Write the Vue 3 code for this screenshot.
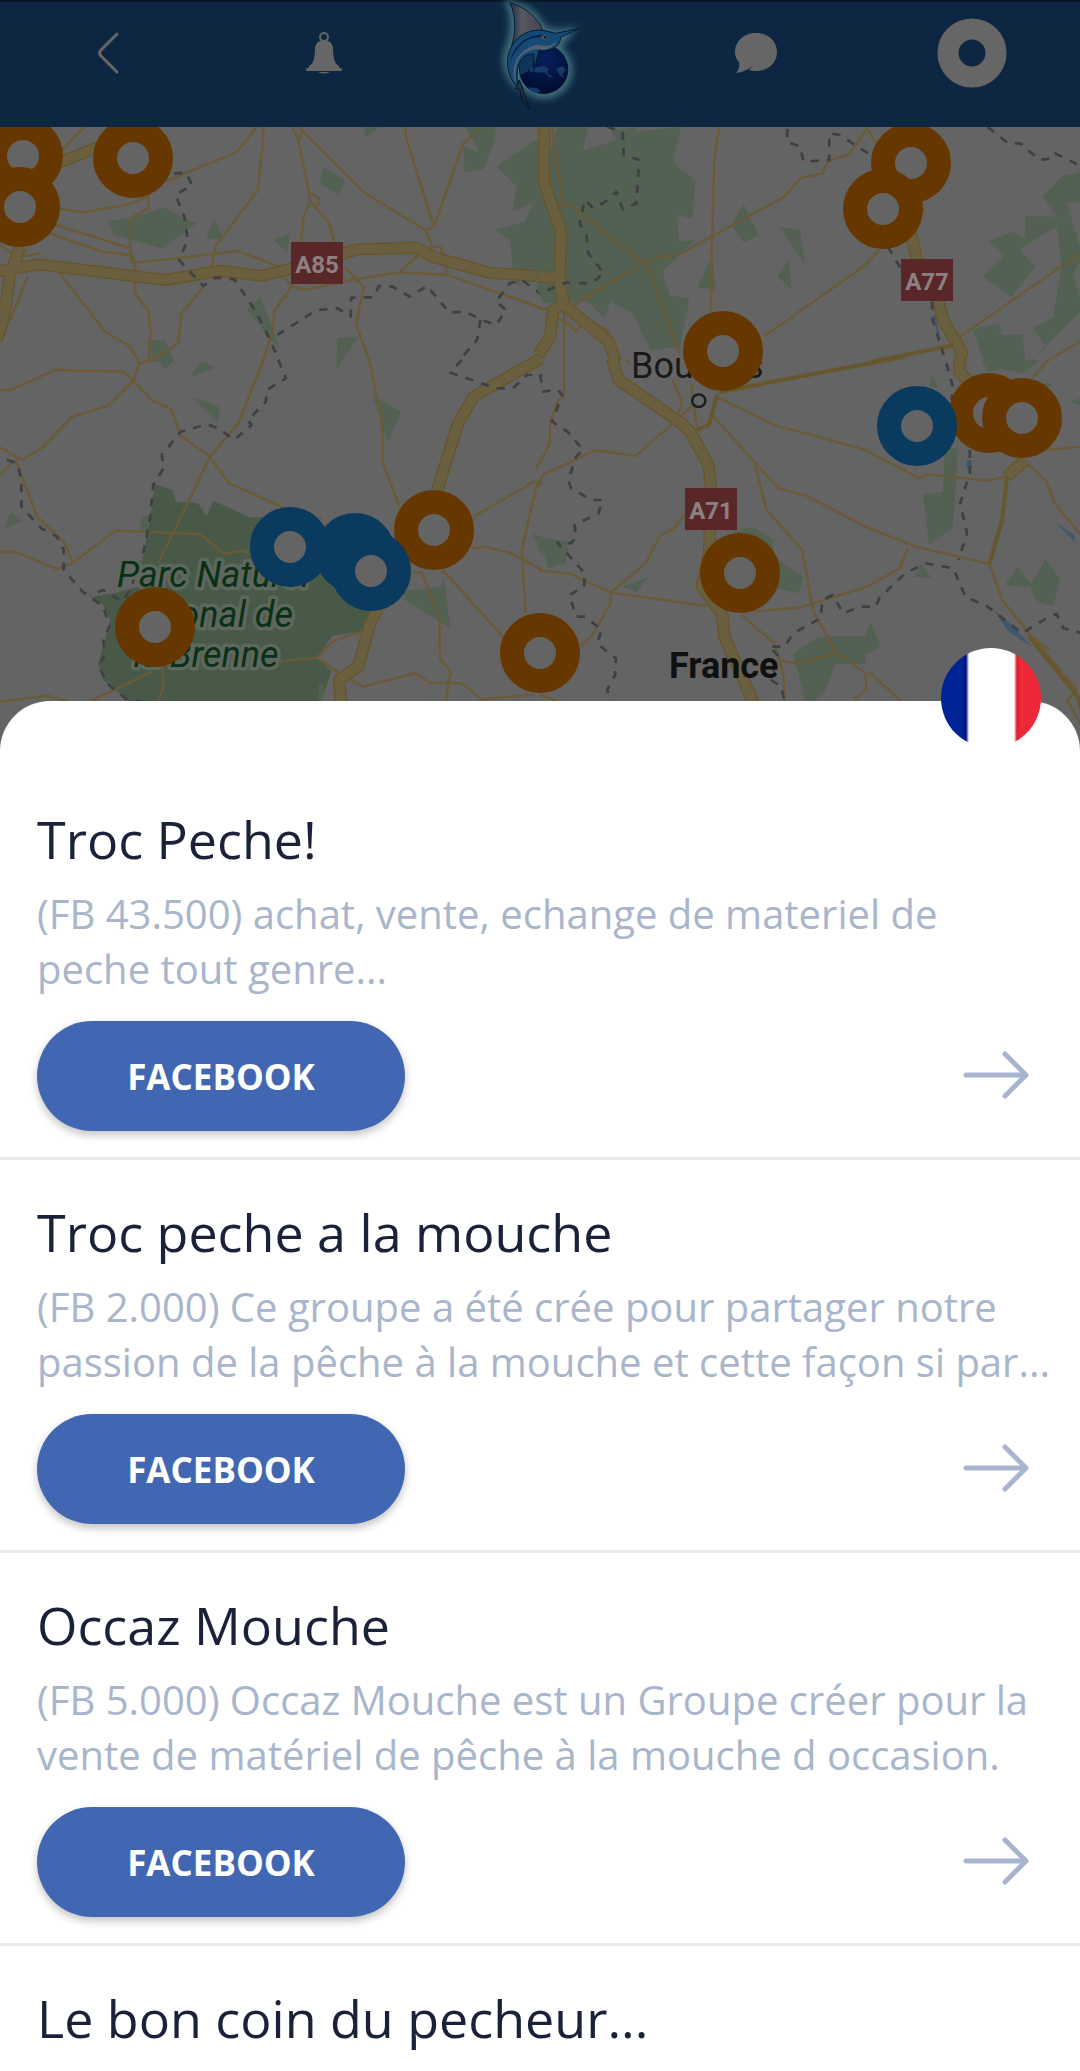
<script setup>
const pins = [
  { x: 23, y: 156, kind: 'orange' },
  { x: 20, y: 207, kind: 'orange' },
  { x: 133, y: 158, kind: 'orange' },
  { x: 911, y: 163, kind: 'orange' },
  { x: 883, y: 209, kind: 'orange' },
  { x: 723, y: 351, kind: 'orange' },
  { x: 434, y: 530, kind: 'orange' },
  { x: 355, y: 553, kind: 'blue' },
  { x: 290, y: 547, kind: 'blue' },
  { x: 371, y: 571, kind: 'blue' },
  { x: 155, y: 627, kind: 'orange' },
  { x: 540, y: 653, kind: 'orange' },
  { x: 989, y: 413, kind: 'orange' },
  { x: 1022, y: 418, kind: 'orange' },
  { x: 917, y: 426, kind: 'blue' },
  { x: 740, y: 573, kind: 'orange' },
]

const shields = [
  { x: 291, y: 242, name: 'A85' },
  { x: 901, y: 259, name: 'A77' },
  { x: 685, y: 488, name: 'A71' },
]

const groups = [
  {
    title: 'Troc Peche!',
    text: '(FB 43.500) achat, vente, echange de materiel de\npeche tout genre...',
  },
  {
    title: 'Troc peche a la mouche',
    text: '(FB 2.000) Ce groupe a été crée pour partager notre\npassion de la pêche à la mouche et cette façon si par...',
  },
  {
    title: 'Occaz Mouche',
    text: '(FB 5.000) Occaz Mouche est un Groupe créer pour la\nvente de matériel de pêche à la mouche d occasion.',
  },
  { title: 'Le bon coin du pecheur...' },
]
</script>

<template>
  <div class="page">
    <header class="topbar">
      <button class="nav" aria-label="Retour">
        <svg width="24" height="44" viewBox="0 0 24 44" fill="none" stroke="#666" stroke-width="3" stroke-linecap="round" stroke-linejoin="round">
          <path d="M21 3 L5 19 Q2 22 5 25 L21 41" />
        </svg>
      </button>
      <button class="nav" aria-label="Notifications">
        <svg width="36" height="42" viewBox="0 0 36 42" fill="#666">
          <circle cx="18" cy="5" r="4" fill="none" stroke="#666" stroke-width="2" />
          <path d="M18 8 C24 8 27 12 27 17 C27 27 29 32 33 34 V36 H35 Q36 36 36 37 V38 Q36 39 35 39 H1 Q0 39 0 38 V37 Q0 36 1 36 H3 V34 C7 32 9 27 9 17 C9 12 12 8 18 8Z" />
          <path d="M12 40 H24 Q18 43 12 40Z" />
        </svg>
      </button>
      <a class="nav" href="#" aria-label="Accueil">
        <svg class="logo" width="100" height="102" viewBox="60 6 300 306">
          <defs>
            <filter id="halo" x="-50%" y="-50%" width="200%" height="200%"><feGaussianBlur stdDeviation="11" /></filter>
            <radialGradient id="globe" cx=".55" cy=".3" r=".75">
              <stop offset="0" stop-color="#071f5a" />
              <stop offset="1" stop-color="#010a2c" />
            </radialGradient>
            <linearGradient id="fin" x1="0" y1="0" x2="1" y2="0">
              <stop offset="0" stop-color="#17304a" />
              <stop offset=".35" stop-color="#585660" />
              <stop offset="1" stop-color="#46454f" />
            </linearGradient>
          </defs>
          <g filter="url(#halo)" fill="#40707c" stroke="#40707c" stroke-width="20">
            <circle cx="222" cy="210" r="76" />
            <path d="M118 12 C165 20 205 50 218 88 L265 100 L300 94 L262 140 L150 260 C105 230 100 170 118 140 C132 100 134 50 118 12Z" />
          </g>
          <circle cx="221" cy="208" r="74" fill="url(#globe)" />
          <path d="M150 185 Q172 158 194 158 L188 195 L172 215 L150 226Z" fill="#103558" />
          <path d="M178 205 l14 -8 12 5 18 -4 14 8 -4 12 20 16 -14 -4 -16 -14 -18 2 -14 -4 -8 6Z M258 205 l22 -6 8 12 -12 12 8 12 -16 -10Z M174 262 l28 2 10 12 -22 2Z" fill="#163968" />
          <path d="M120 8 C165 20 206 55 218 92 C185 92 145 110 124 140 C138 100 138 50 120 8Z" fill="url(#fin)" stroke="#0a1c30" stroke-width="3" />
          <path d="M122 145 C140 106 180 86 220 91 L256 100 L328 86 L270 112 L272 118 L264 134 C245 152 214 156 207 150 L192 210 L192 162 C156 160 130 196 146 264 C112 236 104 180 122 145Z" fill="#164a76" stroke="#06182b" stroke-width="3" />
          <path d="M119 190 C130 132 175 102 222 104 L208 112 C165 112 136 145 119 190Z" fill="#08204a" />
          <path d="M132 236 C124 178 160 140 204 134 Q224 140 244 134 L262 126 C246 148 216 152 204 147 C154 150 126 188 140 252Z" fill="#526072" />
          <circle cx="223" cy="112" r="8" fill="#707070" stroke="#102a40" stroke-width="2" />
          <circle cx="224" cy="112" r="4" fill="#05101c" />
          <path d="M136 266 L148 240 L158 264 Q164 300 178 325 Q154 304 149 268Z" fill="#1c3347" stroke="#07111d" stroke-width="3" />
        </svg>
      </a>
      <button class="nav" aria-label="Messages">
        <svg width="42" height="40" viewBox="0 0 42 40" fill="#666">
          <path d="M21 0 C33 0 42 8 42 19 C42 30 33 38 21 38 Q17 38 14 37 L18 33 Q10 39 1 40 Q5 36 4 29 Q0 25 0 19 C0 8 9 0 21 0Z" />
        </svg>
      </button>
      <button class="nav" aria-label="Profil">
        <svg width="70" height="70" viewBox="0 0 70 70">
          <circle cx="35" cy="35" r="24" fill="none" stroke="#666" stroke-width="21" />
        </svg>
      </button>
    </header>

    <svg class="map" viewBox="0 127 1080 633" preserveAspectRatio="xMidYMin slice" role="img" aria-label="Carte">
      <!-- north-west tile -->
      <g transform="scale(.3444 .3333)">
        <path class="wood" d="M312 662 L380 655 L475 622 L570 670 L472 746 L330 704Z M622 655 L650 716 L598 716Z M795 720 L841 702 L836 760Z M938 502 L1000 540 L986 588 L930 552Z M1058 381 H1104 L1060 414Z M1350 381 H1440 L1436 420 L1404 508 L1350 516 L1345 438 L1392 456Z M1575 405 L1442 500 L1500 560 L1488 634 L1550 610 L1524 664 L1436 690 L1482 720 L1488 810 H1575Z M756 892 L812 1045 L780 1010 L716 928Z M425 1020 L480 1022 L505 1085 H450Z M978 1014 L1042 1010 L990 1085 H978Z M1475 850 l30 -10 15 15Z" />
        <g class="road">
          <path d="M245 381 L180 450 M745 381 L688 456 L480 545 M765 381 L762 440 L748 572 L625 740 L614 800 M848 381 L868 425 L902 605 L882 650 L874 726 M868 381 L1060 580 L1235 690 L1255 735 M878 395 L866 425 M902 605 L955 668 L970 726 M905 580 L930 600 L918 622 M1178 381 V410 L1260 680 L1235 690 M1400 381 L1345 430 L1260 680" />
          <path d="M170 625 L240 637 L365 615 L432 590 L430 625 L380 655 L378 755 L392 788 V880 L432 935 L437 1000 L432 1080 M160 675 L380 745 M145 700 L295 755 L375 765 M392 788 L560 770 L688 753 L820 803 M395 800 L375 765 M0 735 L60 780 M170 815 L305 995 L375 1038 L400 1080 M590 862 L527 940 L518 1030 L440 1080 M850 855 L798 930 L790 1000 L765 1080 M825 833 L850 860 L885 870 L1045 835 L1165 817 L1300 825 L1575 925 M1160 817 L1215 765 M1000 800 L1056 860 L1034 975 L1072 1080 M1250 740 L1280 740 L1300 825 M60 770 L120 760 M80 830 L30 960" />
        </g>
        <path class="casing" d="M155 495 L300 435 M-10 815 L110 793 L480 840 L640 812 L760 828 L850 805 L1000 760 L1040 748 L1210 743 L1260 772 L1420 818 L1580 830 M60 740 L30 820 L10 960 L-10 1020" />
        <path class="motorway" d="M155 495 L300 435 M-10 815 L110 793 L480 840 L640 812 L760 828 L850 805 L1000 760 L1040 748 L1210 743 L1260 772 L1420 818 L1580 830 M60 740 L30 820 L10 960 L-10 1020" />
        <path class="border" d="M505 520 L540 518 L558 555 L510 585 L535 650 L545 720 L520 780 L590 858 L625 833 L680 838 L740 930 L775 1000 L810 1080 M805 1005 L920 930 L980 925 L1018 950 L1020 893 L1085 892 L1100 858 L1140 860 L1190 890 L1240 858 L1305 938 L1350 935 L1405 962 L1440 975 L1470 930 L1440 905 L1480 850 L1515 840 L1575 885 M1395 960 L1385 1020 L1335 1080" />
      </g>

      <!-- north-east tile -->
      <g transform="translate(540 0) scale(.3444 .3333)">
        <path class="wood" d="M50 381 H140 L124 452 L222 420 L205 395 L275 381 L280 395 L410 381 L386 488 L452 542 L442 656 L398 645 L404 725 L450 720 L356 815 L376 886 L434 896 L406 1040 L320 1050 L268 940 L205 905 L186 955 L140 905 L10 910 L-10 860 V610 L25 470Z M592 612 L634 705 L592 728 L554 675Z M695 680 L756 690 L770 795Z M724 778 L730 866 L690 830Z M500 765 L510 870 L458 862Z M1408 648 L1500 650 L1460 590 L1520 525 L1575 520 V605 L1530 610 L1575 770 L1550 820 L1575 930 L1420 1085 L1470 1040 L1430 985 L1490 950 L1515 790 L1500 680 L1392 748 L1438 800 L1370 890 L1284 830 L1350 765 L1300 725 L1370 695 L1410 715Z M1255 988 L1332 972 L1340 1005 L1402 1004 L1410 1085 H1290Z" />
        <g class="road">
          <path d="M35 381 L66 610 M45 605 L95 620 L300 790 L320 820 L405 1060 M520 381 L506 480 L500 710 L496 935 M100 915 L300 785 L410 760 L710 590 L755 535 L820 520 L836 485 L900 460 L950 385 L975 430 M985 750 L945 795 L650 1010 M1105 600 L1115 640 M1575 755 L1220 1010 M1575 1020 L1470 1085 M-5 925 L40 930 M70 960 L105 995 L130 960 L195 990 L220 1085 M70 930 V1080 M20 940 L70 965" />
        </g>
        <path class="casing" d="M12 381 V550 L60 690 L58 860 L70 915 L200 1025 L220 1085 M-5 830 L58 833 M65 915 L38 930 L30 1010 L-5 1065 M1075 690 L1095 780 M1155 900 L1170 960 L1225 1055 L1220 1085" />
        <path class="motorway" d="M12 381 V550 L60 690 L58 860 L70 915 L200 1025 L220 1085 M-5 830 L58 833 M65 915 L38 930 L30 1010 L-5 1065 M1075 690 L1095 780 M1155 900 L1170 960 L1225 1055 L1220 1085" />
        <path class="trunk" d="M960 1085 L1200 1036" />
        <path class="river" d="M1145 945 L1160 1020" />
        <path class="border" d="M195 381 L240 395 L243 465 L288 480 L280 610 L240 628 L222 575 L190 605 L155 625 L130 600 L115 670 L135 705 L140 760 L185 820 L150 850 L75 848 L0 880 M718 387 V425 L755 440 L765 485 L840 480 V400 L870 405 L960 465 M1300 381 L1360 430 L1395 430 L1450 480 L1485 475 L1495 460 L1555 490 L1560 520 M1010 740 L1050 810 M1138 905 L1140 960 L1172 1065" />
      </g>

      <!-- south-west tile -->
      <g transform="translate(0 360) scale(.3444 .3333)">
        <path class="park" d="M450 372 L500 390 L512 425 L575 430 L600 468 L620 422 L725 472 H800 L1100 760 L1060 812 L965 828 L920 890 L962 935 L930 1030 H380 L300 960 L285 910 L305 840 L320 780 L300 735 L262 712 L330 700 L400 680 L435 480Z" />
        <path class="wood" d="M460 0 H505 L480 30Z M585 5 L628 22 L548 52Z M552 108 L637 140 L634 188Z M978 -10 H1000 L978 34Z M1080 105 L1164 155 L1128 246 L1110 190Z M30 455 L65 482 L12 506Z M412 465 L432 470 L428 515 L406 510Z M1175 692 L1280 680 L1288 645 L1308 805 L1175 720Z M1545 520 l30 10 v60Z M925 975 L942 970 L935 1025 H925Z" />
        <g class="road">
          <path d="M0 92 L35 88 L160 30 L358 35 L388 62 L440 120 L498 148 L525 228 L610 290 L662 368 L820 442 M388 62 L405 10 L445 0 M388 62 L312 138 L210 170 L120 265 L65 300 L0 262 M40 300 L0 345 M45 300 L108 470 L185 545 L212 608 L335 512 L580 522 L650 580 L710 572 L740 590 M212 608 L168 628 L45 576 H0 M400 0 L405 20 M765 0 L692 190 L610 290 L460 610 M1072 0 L1110 190 L1112 310 L1160 440 M820 442 L935 475 M1375 470 L1550 365 L1575 370 M1560 370 L1515 570 L1526 760 M1370 565 L1405 560 L1480 578 L1575 630 M1555 330 L1575 290 M1285 630 L1460 830 M1190 635 L1225 637 L1275 770 L1278 895 L1308 935 L1295 1025 M810 905 L920 893 L965 845 L1060 810 M920 893 L985 940 L1055 980 L1205 940 L1250 968 L1340 970 L1400 1018 L1555 1003 M0 1025 L140 1008 L200 1025 M260 1025 L440 935 M470 920 L475 980 L460 1025" />
        </g>
        <path class="casing" d="M1570 -5 L1375 110 L1330 190 L1270 390 M1100 740 L1075 790 L1040 920 L985 960 L992 1060" />
        <path class="motorway" d="M1570 -5 L1375 110 L1330 190 L1270 390 M1100 740 L1075 790 L1040 920 L985 960 L992 1060" />
        <path class="border" d="M808 0 L830 55 L775 90 L772 125 L720 180 L730 195 L680 240 L635 205 L600 193 L525 215 L470 285 L475 325 L445 375 L435 480 L418 570 L378 690 L355 725 L300 690 L260 705 M20 300 L50 310 L62 360 V440 L120 505 L165 530 L185 570 V630 L240 695 L300 740 L318 800 L300 840 L305 880 L288 920 L310 970 L370 1020 L430 1025 M1340 0 L1308 38 L1440 85 L1490 85 L1530 45 L1575 45" />
      </g>

      <!-- south-east tile -->
      <g transform="translate(540 360) scale(.3444 .3333)">
        <path class="wood" d="M-5 532 L85 545 L75 610 L25 625Z M240 680 L315 652 L280 695Z M560 515 L620 500 L678 540 V590 L765 652 L752 700 L690 685Z M735 880 L810 830 L944 828 L960 786 L990 860 L945 885 V912 L856 912 L830 990 L790 1030 L768 1020Z M1175 265 L1213 265 L1200 500 L1130 555 L1112 405 L1170 395Z M1105 610 L1138 655 L1086 650Z M1350 675 L1386 620 L1424 670 L1468 598 L1510 660 L1490 738 L1445 725 L1422 678 L1410 680Z M1284 0 H1450 L1405 40 L1340 28 L1300 35Z M1138 42 L1155 85 L1130 80Z M1455 70 H1490 L1470 85Z M1540 125 L1575 112 V140Z" />
        <path class="water" d="M1495 485 L1552 525 V546Z M1318 750 L1365 790 L1430 862 L1360 815Z M1240 300 L1254 300 V325 L1238 325Z" />
        <g class="road">
          <path d="M70 0 V110 L50 125 L30 190 L28 250 L0 310 M-5 380 L8 345 L162 270 L278 288 L380 195 L450 130 M250 0 L262 15 M385 60 L412 125 L400 165 M440 70 L455 200 M500 165 L692 385 L775 408 L945 500 L1090 560 L1305 612 M625 318 L658 450 L762 570 L792 750 L862 880 L945 940 L960 940 L1050 1025 M520 115 L680 195 L945 270 L1100 355 L1125 343 L1300 362 L1350 350 M1068 565 L1045 625 L950 680 L755 742 L620 755 M430 455 L385 508 L350 525 L308 608 L205 698 L85 640 L0 632 M205 698 L485 738 M205 698 L203 735 L152 825 L118 860 M585 765 L680 850 L708 950 L710 1025 M690 900 L745 910 L862 880 M945 940 L948 990 L912 1015 M1305 612 L1342 720 L1420 820 L1560 990 M1410 305 L1468 360 L1495 430 L1575 530 M1470 270 L1575 260 M1430 55 L1475 0 M1415 820 L1480 870 M0 1005 L55 1025 M1560 990 L1530 1020 L1575 1100" />
        </g>
        <path class="casing" d="M210 -5 L228 60 L405 185 L440 220 L490 320 L498 400 L490 590 L470 680 L530 765 L535 830 L625 1040 M1220 -5 L1218 35 L1250 70 M1410 300 L1355 350" />
        <path class="motorway" d="M210 -5 L228 60 L405 185 L440 220 L490 320 L498 400 L490 590 L470 680 L530 765 L535 830 L625 1040 M1220 -5 L1218 35 L1250 70 M1410 300 L1355 350" />
        <path class="trunk" d="M520 98 L700 60 L1060 -10 M515 105 L490 195 L450 212 M1356 350 L1342 480 L1305 612 M1420 830 L1565 1015 L1580 1090" />
        <path class="border" d="M0 45 L10 95 L50 88 L65 105 L35 185 L80 215 L125 270 L105 290 L82 360 L90 385 L150 420 L182 420 L170 460 L100 495 L105 530 L90 550 L50 548 L130 640 L128 680 L85 705 L105 770 L130 770 L180 810 L165 850 L220 895 L218 945 L195 990 L205 1025 M708 1015 L700 980 L672 960 L690 885 L665 860 L710 860 L735 820 L815 775 L820 720 L850 705 L880 760 L930 740 L975 740 L985 715 L1060 640 L1120 610 L1200 625 L1235 710 L1300 740 L1400 820 L1470 775 L1500 762 L1520 805 L1575 820 M1180 10 L1200 85 L1195 120 M1248 270 V340 L1220 430 L1240 520 L1215 600" />
        <circle cx="461" cy="122" r="19" fill="#646464" stroke="#1c1c1c" stroke-width="7" />
      </g>

      <g class="park-label">
        <text x="117" y="587">Parc Naturel</text>
        <text x="293" y="627" text-anchor="end">régional de</text>
        <text x="206" y="667" text-anchor="middle">la Brenne</text>
      </g>
      <text class="city" x="631" y="378">Bourges</text>
      <text class="country" x="669" y="678">France</text>

      <g v-for="shield in shields" :key="shield.name">
        <rect class="shield" :x="shield.x" :y="shield.y" width="52" height="42" />
        <text class="shield-name" :x="shield.x + 26" :y="shield.y + 31" text-anchor="middle">{{ shield.name }}</text>
      </g>

      <circle v-for="(pin, i) in pins" :key="i" class="pin" :class="pin.kind" :cx="pin.x" :cy="pin.y" r="28" />
    </svg>

    <main class="sheet">
      <svg class="flag" width="100" height="100" viewBox="0 0 100 100" role="img" aria-label="France">
        <defs>
          <clipPath id="disc"><circle cx="50" cy="50" r="50" /></clipPath>
          <linearGradient id="tricolore">
            <stop offset="0" stop-color="#002395" />
            <stop offset=".22" stop-color="#002395" />
            <stop offset=".25" stop-color="#000f80" />
            <stop offset=".28" stop-color="#fff" />
            <stop offset=".73" stop-color="#fff" />
            <stop offset=".76" stop-color="#d81a2b" />
            <stop offset=".79" stop-color="#ed2939" />
            <stop offset="1" stop-color="#ed2939" />
          </linearGradient>
        </defs>
        <rect width="100" height="100" fill="url(#tricolore)" clip-path="url(#disc)" />
      </svg>

      <article v-for="group in groups" :key="group.title" class="group">
        <h2>{{ group.title }}</h2>
        <template v-if="group.text">
          <p>{{ group.text }}</p>
          <div class="actions">
            <button class="facebook">FACEBOOK</button>
            <a class="more" href="#" :aria-label="group.title">
              <svg width="66" height="50" viewBox="0 0 66 50" fill="none" stroke="#a9b5d0" stroke-width="5" stroke-linecap="round" stroke-linejoin="round">
                <path d="M3 24 H63 M42 3 L63 24 L42 45" />
              </svg>
            </a>
          </div>
        </template>
      </article>
    </main>
  </div>
</template>

<style>
body {
  margin: 0;
  background: #fff;
}
</style>

<style scoped>
.page {
  display: flex;
  flex-direction: column;
  min-height: 100vh;
  font-family: "Open Sans", "Noto Sans", sans-serif;
}

.topbar {
  display: grid;
  grid-template-columns: repeat(5, 1fr);
  align-items: center;
  height: 102px;
  padding-bottom: 23px;
  border-top: 2px solid #071827;
  background: #0d2742;
}

.nav {
  display: flex;
  justify-content: center;
  align-items: center;
  padding: 0;
  border: 0;
  background: none;
}

.logo {
  overflow: visible;
}

.map {
  display: block;
  width: 100%;
  background: #646464;
}

.wood {
  fill: #536153;
}

.park {
  fill: #485948;
}

.water {
  fill: #41586a;
}

.river,
.road path,
.casing,
.motorway,
.trunk,
.border {
  fill: none;
  stroke-linejoin: round;
}

.river {
  stroke: #41586a;
  stroke-width: 6;
}

.road path {
  stroke: #6a5a36;
  stroke-width: 7;
}

.casing {
  stroke: #67552b;
  stroke-width: 36;
}

.motorway {
  stroke: #6a6040;
  stroke-width: 28;
}

.trunk {
  stroke: #67572d;
  stroke-width: 12;
}

.border {
  stroke: #3f4043;
  stroke-width: 8;
  stroke-dasharray: 24 24;
}

.park-label {
  font: italic 36px Roboto, sans-serif;
  fill: #0b3015;
  stroke: #5d675d;
  stroke-width: 7;
  stroke-linejoin: round;
  paint-order: stroke;
}

.city {
  font: 36px Roboto, sans-serif;
  fill: #191919;
}

.country {
  font: bold 36px Roboto, sans-serif;
  fill: #101010;
}

.shield {
  fill: #5a2729;
}

.shield-name {
  font: bold 24px Roboto, sans-serif;
  fill: #8c8080;
}

.pin {
  fill: #646464;
  stroke-width: 24;
}

.orange {
  stroke: #663800;
}

.blue {
  stroke: #0a3a5e;
}

.sheet {
  position: relative;
  flex: 1;
  margin-top: -59px;
  padding-top: 66px;
  border-radius: 50px 50px 0 0;
  background: #fff;
}

.flag {
  position: absolute;
  top: -53px;
  right: 39px;
}

.group {
  padding: 36px 37px 26px;
  border-bottom: 3px solid #ebebeb;
}

.group:last-child {
  padding-bottom: 0;
  border-bottom: 0;
}

h2 {
  margin: 0;
  font-size: 52px;
  font-weight: 400;
  line-height: 72px;
  color: #1b2138;
}

p {
  margin: 11px 0 25px;
  font-size: 40px;
  line-height: 55px;
  white-space: pre;
  color: #a8b5cb;
}

.actions {
  display: flex;
  justify-content: space-between;
  align-items: center;
  padding-right: 14px;
}

.facebook {
  width: 368px;
  height: 110px;
  padding: 0;
  border: 0;
  border-radius: 55px;
  background: #4267b2;
  box-shadow: 0 4px 8px rgba(0, 0, 0, 0.24);
  font: bold 35px "Open Sans", "Noto Sans", sans-serif;
  color: #fff;
}

.more {
  display: flex;
}
</style>
